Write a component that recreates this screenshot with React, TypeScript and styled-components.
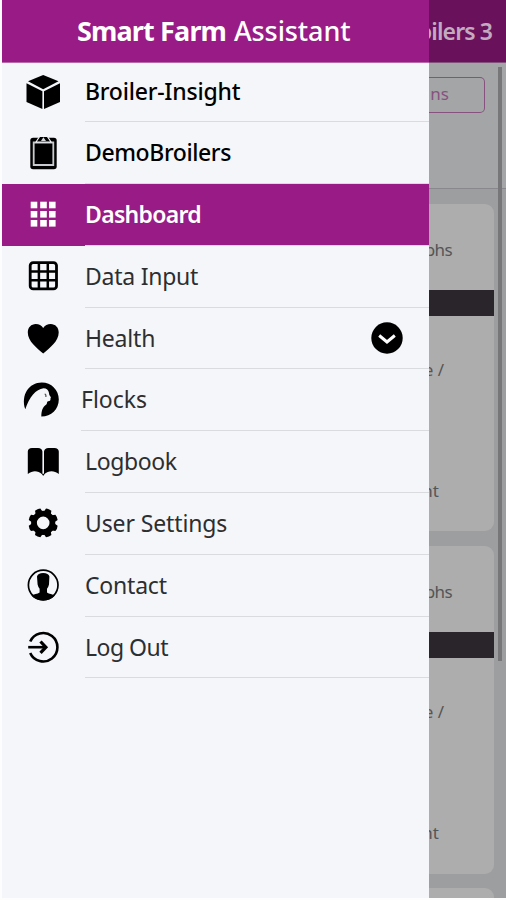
import React from "react";
import styled, { createGlobalStyle } from "styled-components";

const Global = createGlobalStyle`
  * { box-sizing: border-box; }
  body { margin: 0; background: #fff; font-family: "Noto Sans", "Open Sans", sans-serif; }
`;

const Screen = styled.div`
  display: flex;
  width: 506px;
  height: 900px;
  padding: 0 0 2px 2px;
  overflow: hidden;
  background: #fdfdfe;
`;

const Drawer = styled.nav`
  flex: none;
  width: 427px;
  height: 898px;
  background: #f4f6fa;
`;

const Title = styled.header`
  display: flex;
  height: 63px;
  padding: 1px 0 0 75px;
  line-height: 60px;
  background: #991b85;
  border-bottom: 1px solid #b968ab;
  color: #fff;
  font-size: 27px;
  font-weight: 500;
  white-space: pre;
  b { width: 157px; font-weight: 700; letter-spacing: -0.85px; }
  span { letter-spacing: -0.1px; }
`;

const Row = styled.div<{ $active?: boolean; $first?: boolean; $inset?: number }>`
  display: flex;
  height: ${(p) => (p.$first ? 59.2 : 61.8)}px;
  padding-left: ${(p) => p.$inset ?? 83}px;
  position: relative;
  background: ${(p) => (p.$active ? "#991b85" : "transparent")};
  color: ${(p) => (p.$active ? "#fff" : "#000")};
`;

const IconSlot = styled.span<{ $first?: boolean }>`
  position: absolute;
  left: 23px;
  top: ${(p) => (p.$first ? 10.6 : 12.4)}px;
  width: 36px;
  height: 36px;
  svg { display: block; overflow: visible; }
`;

const Label = styled.span<{ $weight: number; $track: number; $first?: boolean }>`
  flex: 1;
  line-height: ${(p) => (p.$first ? 56 : 60)}px;
  border-bottom: 1px solid #d9dbde;
  font-size: 23px;
  font-weight: ${(p) => p.$weight};
  letter-spacing: ${(p) => p.$track}px;
  color: ${(p) => (p.$weight === 400 ? "#2d2e30" : "inherit")};
  white-space: nowrap;
`;

const Toggle = styled.span`
  position: absolute;
  right: 26px;
  top: 14.5px;
  width: 32px;
  height: 32px;
  svg { display: block; }
`;

const Behind = styled.main`
  flex: 1;
  display: flex;
  flex-direction: column;
  overflow: hidden;
  background: #9d9ea0;
  color: #555557;
`;

const BehindBar = styled.div`
  flex: none;
  display: flex;
  justify-content: flex-end;
  height: 63px;
  padding-right: 14px;
  line-height: 62px;
  background: #69125b;
  border-bottom: 1px solid #80527a;
  color: #c3aac0;
  font-size: 23px;
  font-weight: 600;
  letter-spacing: -0.9px;
  white-space: nowrap;
`;

const Scroller = styled.div`
  position: relative;
  display: flex;
  flex-direction: column;
  height: 835px;
`;

const Thumb = styled.i`
  position: absolute;
  right: 4px;
  top: 4px;
  width: 4px;
  height: 594px;
  background: #77777a;
`;

const Tools = styled.div`
  flex: none;
  height: 126px;
  padding-top: 14px;
  background: #a4a5a7;
  border-bottom: 1px solid #89898d;
`;

const Outline = styled.div`
  width: 56px;
  height: 36px;
  padding-right: 35px;
  display: flex;
  justify-content: flex-end;
  line-height: 32px;
  border: 1.5px solid #87527f;
  border-left: 0;
  border-radius: 0 5px 5px 0;
  color: #87527f;
  font-size: 17px;
`;

const Card = styled.section<{ $gap: number; $height: number }>`
  flex: none;
  width: 65px;
  height: ${(p) => p.$height}px;
  margin-top: ${(p) => p.$gap}px;
  background: #adadad;
  border-radius: 0 9px 9px 0;
  overflow: hidden;
`;

const CardHead = styled.div`
  width: 23px;
  height: 86px;
  padding-top: 33px;
  display: flex;
  justify-content: flex-end;
  line-height: 26px;
  font-size: 17px;
  letter-spacing: -0.6px;
`;

const Band = styled.div`
  height: 26px;
  background: #29252b;
`;

const Line = styled.div<{ $gap: number; $width: number }>`
  width: ${(p) => p.$width}px;
  height: 26px;
  margin-top: ${(p) => p.$gap}px;
  display: flex;
  justify-content: flex-end;
  line-height: 26px;
  font-size: 17px;
  white-space: nowrap;
`;

/* All icons share a 36 x 36 grid. */
const Svg = ({ children }: { children: React.ReactNode }) => (
  <svg width="36" height="36" viewBox="0 0 36 36" fill="currentColor">{children}</svg>
);

const Cube = () => (
  <Svg>
    <path d="M18.200 1 33.500 7.300 18.200 15.200 3 7.300Z" />
    <path d="M1.500 9.300 17.400 17.200V35L1.500 28Z" />
    <path d="M19 17.200 35 9.300V28L19 35Z" />
  </Svg>
);
const Clipboard = () => (
  <Svg>
    <rect x="5.300" y="2.800" width="26.400" height="31.500" rx="2.800" />
    <path d="M8.700 7.500h19.600v22.500H8.700Z" fill="none" stroke="#c9cacd" strokeWidth="1.800" />
    <path d="m11 7 3.700-5.600h7.600L26 7Z" stroke="#f4f6fa" strokeWidth="1.100" />
    <path d="m16 6 2.400-3.700L21 6Z" fill="#d8d9dc" />
  </Svg>
);
const Tiles = () => (
  <Svg>
    {[5.7, 15, 24].map((y) => [5.7, 15.2, 24].map((x) => (
      <rect key={`${x}-${y}`} x={x} y={y} width="6.600" height="6.600" />
    )))}
  </Svg>
);
const Table = () => (
  <Svg>
    <rect x="5.200" y="4.600" width="26.300" height="26.300" rx="3" fill="none" stroke="currentColor" strokeWidth="2.800" />
    <path d="M13.900 5v26M22.800 5v26M5 13.400h26M5 22.200h26" stroke="currentColor" strokeWidth="2.500" />
  </Svg>
);
const Heart = () => (
  <Svg>
    <path d="M18.200 33.500C12 28 2.800 21.500 2.800 12.500 2.800 7.500 6.200 4 10.800 4c3.100 0 5.800 1.500 7.400 4.100C19.800 5.500 22.600 4 25.700 4c4.600 0 8 3.500 8 8.500 0 9-9.200 15.500-15.500 21Z" />
  </Svg>
);
const Hen = () => (
  <Svg>
    <path d="M.3 27.300C-4.500 13 4 .4 16.800.4c9.500 0 17 7.500 17 17 0 9.600-7.700 17.300-17.500 17.200.2-6.500 1.400-9.500 5-12 .7-.5.500-2.300 1.200-3.100.8-.9 2.600-.4 2.900-1.600.2-.9-.1-1.300.4-2.100.3-.5-.2-1.100-.8-1.700-.7-.9-.8-1.600-1-3C23.600 8 21.500 6.200 18.500 6.200 11 7 4.200 15 .3 27.300Z" />
    <path d="M19.700 12.200q1.500.2 1.200 2.800" fill="none" stroke="#555" strokeWidth="1.200" />
  </Svg>
);
const Book = () => (
  <Svg>
    <path d="M2.800 30V7.500Q3 4 7 4h6Q17 4 17.400 7.500v23C12.500 26.300 8 26.300 2.800 30Z" />
    <path d="M19 30.500v-23Q19.500 4 23.500 4h6q4 0 4.300 3.500V30c-5-3.700-10-3.700-14.800.5Z" />
    <path d="m16.800 29.800 1.400 2.300 1.400-2.300" />
  </Svg>
);
const Gear = () => (
  <Svg>
    <circle cx="18.200" cy="17.900" r="9.200" fill="none" stroke="currentColor" strokeWidth="5.800" />
    {[22.5, 67.5, 112.5, 157.5, 202.5, 247.5, 292.5, 337.5].map((a) => (
      <path key={a} d="M14.200 8.500 15.300 3.500q2.900-1 5.800 0l1.100 5Z" transform={`rotate(${a} 18.200 17.900)`} />
    ))}
  </Svg>
);
const Person = () => (
  <Svg>
    <circle cx="18.200" cy="18" r="14.800" fill="none" stroke="currentColor" strokeWidth="1.700" />
    <path d="M12 9.500Q12.800 6 18.200 6t6.200 3.500l-.4 8q-.7 3-2 4.300v3.700c2 1.500 5.600 1.700 8 3-3 3.300-7.200 5-11.800 5s-9-1.700-12-5c2.500-1.300 6.400-1.500 8.400-3v-3.700q-1.300-1.300-2-4.300Z" />
  </Svg>
);
const Exit = () => (
  <Svg>
    <path d="M5.200 12.500a14.200 14.200 0 1 1 0 11.400" fill="none" stroke="currentColor" strokeWidth="2.600" />
    <path d="M3.200 18.200h18" stroke="currentColor" strokeWidth="2.600" />
    <path d="m15.500 12.500 5.400 5.700-5.400 5.700" fill="none" stroke="currentColor" strokeWidth="3.200" />
  </Svg>
);

type Item = { label: string; icon: React.ReactNode; weight: number; track: number; active?: boolean; inset?: number; open?: boolean };

const items: Item[] = [
  { label: "Broiler-Insight", icon: <Cube />, weight: 500, track: -0.22 },
  { label: "DemoBroilers", icon: <Clipboard />, weight: 500, track: -0.4 },
  { label: "Dashboard", icon: <Tiles />, weight: 600, track: -0.7, active: true },
  { label: "Data Input", icon: <Table />, weight: 400, track: -0.25 },
  { label: "Health", icon: <Heart />, weight: 400, track: -0.2, open: true },
  { label: "Flocks", icon: <Hen />, weight: 400, track: 0, inset: 79 },
  { label: "Logbook", icon: <Book />, weight: 400, track: -0.4 },
  { label: "User Settings", icon: <Gear />, weight: 400, track: -0.12 },
  { label: "Contact", icon: <Person />, weight: 400, track: -0.2 },
  { label: "Log Out", icon: <Exit />, weight: 400, track: -0.5 },
];

const DataCard = ({ gap, height }: { gap: number; height: number }) => (
  <Card $gap={gap} $height={height}>
    <CardHead>phs</CardHead>
    <Band />
    <Line $gap={41} $width={15}>e /</Line>
    <Line $gap={95} $width={10}>nt</Line>
  </Card>
);

export default function App() {
  return (
    <>
      <Global />
      <Screen>
        <Drawer>
          <Title><b>Smart Farm </b><span>Assistant</span></Title>
          {items.map((it, i) => (
            <Row key={it.label} $active={it.active} $first={i === 0} $inset={it.inset}>
              <IconSlot $first={i === 0}>{it.icon}</IconSlot>
              <Label $weight={it.weight} $track={it.track} $first={i === 0}>{it.label}</Label>
              {it.open && (
                <Toggle>
                  <svg width="32" height="32" viewBox="0 0 32 32">
                    <circle cx="16" cy="16" r="15.700" />
                    <path d="m8.200 13.500 7.800 6.500 7.800-6.500" fill="none" stroke="#fff" strokeWidth="3" />
                  </svg>
                </Toggle>
              )}
            </Row>
          ))}
        </Drawer>
        <Behind>
          <BehindBar>oilers 3</BehindBar>
          <Scroller>
            <Tools><Outline>ns</Outline></Tools>
            <DataCard gap={15} height={327} />
            <DataCard gap={15} height={328} />
            <Card $gap={14} $height={20} />
            <Thumb />
          </Scroller>
        </Behind>
      </Screen>
    </>
  );
}
